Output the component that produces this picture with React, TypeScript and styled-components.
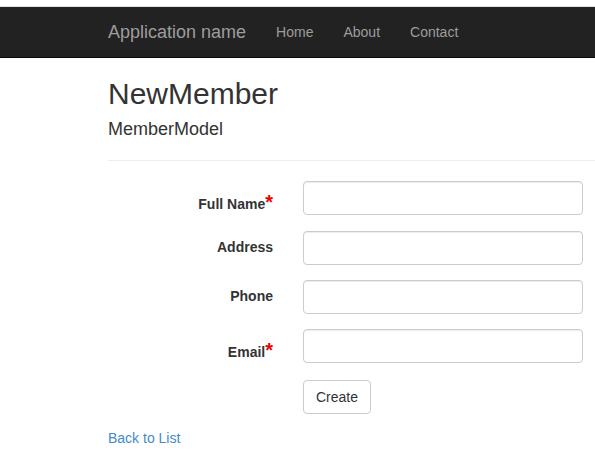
import React from 'react'
import styled, { createGlobalStyle } from 'styled-components'

const Global = createGlobalStyle`
  * { box-sizing: border-box; }
  html, body { margin: 0; padding: 0; background: #fff; overflow-x: hidden; }
  body {
    font-family: "Liberation Sans", Arial, Helvetica, sans-serif;
    font-size: 14px;
    line-height: 1.42857;
    color: #333;
  }
`

const fields = [
  { label: 'Full Name', required: true },
  { label: 'Address', required: false },
  { label: 'Phone', required: false },
  { label: 'Email', required: true },
]

const App = () => {
  return (
    <>
      <Global />
      <TopStrip />
      <Navbar>
        <Brand href="#">Application name</Brand>
        <NavList>
          <li><NavLink href="#">Home</NavLink></li>
          <li><NavLink href="#">About</NavLink></li>
          <li><NavLink href="#">Contact</NavLink></li>
        </NavList>
      </Navbar>
      <Body>
        <Title>NewMember</Title>
        <SubTitle>MemberModel</SubTitle>
        <Rule />
        <Form onSubmit={(e) => e.preventDefault()}>
          {fields.map((f) => (
            <Group key={f.label}>
              <Label>
                {f.label}
                {f.required && <Star>*</Star>}
              </Label>
              <Field>
                <Input type="text" />
              </Field>
            </Group>
          ))}
          <Group>
            <Spacer />
            <Field>
              <Button type="submit">Create</Button>
            </Field>
          </Group>
        </Form>
        <div>
          <BackLink href="#">Back to List</BackLink>
        </div>
      </Body>
    </>
  )
}

export default App

const TopStrip = styled.div`
  height: 7px;
  background: #fff;
  border-bottom: 1px solid #e2e2e2;
`
const Navbar = styled.nav`
  height: 51px;
  background-color: #222;
  border-bottom: 1px solid #080808;
  display: flex;
  align-items: stretch;
  padding-left: 108px;
`
const Brand = styled.a`
  font-size: 18px;
  line-height: 20px;
  padding: 15px 15px 15px 0;
  color: #9d9d9d;
  text-decoration: none;
`
const NavList = styled.ul`
  list-style: none;
  margin: 0;
  padding: 0;
  display: flex;
`
const NavLink = styled.a`
  display: block;
  padding: 15px;
  line-height: 20px;
  color: #9d9d9d;
  text-decoration: none;
`
const Body = styled.div`
  padding-left: 108px;
`
const Title = styled.h2`
  font-size: 30px;
  font-weight: 500;
  line-height: 1.1;
  margin: 19px 0 10px;
  color: #333;
`
const SubTitle = styled.h4`
  font-size: 18px;
  font-weight: 500;
  line-height: 1.1;
  margin: 10px 0 10px;
  color: #333;
`
const Rule = styled.hr`
  margin: 20px 0;
  border: 0;
  border-top: 1px solid #eee;
`
const Form = styled.form`
  margin: 0;
`
const Group = styled.div`
  display: flex;
  align-items: flex-start;
  margin: 0 0 15px -15px;
`
const Label = styled.label`
  flex: 0 0 195px;
  padding: 7px 15px 0;
  text-align: right;
  font-weight: bold;
  color: #333;
  line-height: 1.42857;
`
const Spacer = styled.div`
  flex: 0 0 195px;
`
const Star = styled.span`
  color: #e00;
  font-size: 20px;
  font-weight: bold;
  line-height: 1.42857;
`
const Field = styled.div`
  flex: 0 0 auto;
  padding: 0 15px;
`
const Input = styled.input`
  display: block;
  width: 280px;
  height: 34px;
  padding: 6px 12px;
  font-family: inherit;
  font-size: 14px;
  color: #555;
  background: #fff;
  border: 1px solid #ccc;
  border-radius: 4px;
  box-shadow: inset 0 1px 1px rgba(0, 0, 0, 0.075);
  outline: none;
`
const Button = styled.button`
  height: 34px;
  padding: 6px 12px;
  font-family: inherit;
  font-size: 14px;
  line-height: 20px;
  color: #333;
  background: #fff;
  border: 1px solid #ccc;
  border-radius: 4px;
  cursor: pointer;
`
const BackLink = styled.a`
  color: #428bca;
  text-decoration: none;
`
